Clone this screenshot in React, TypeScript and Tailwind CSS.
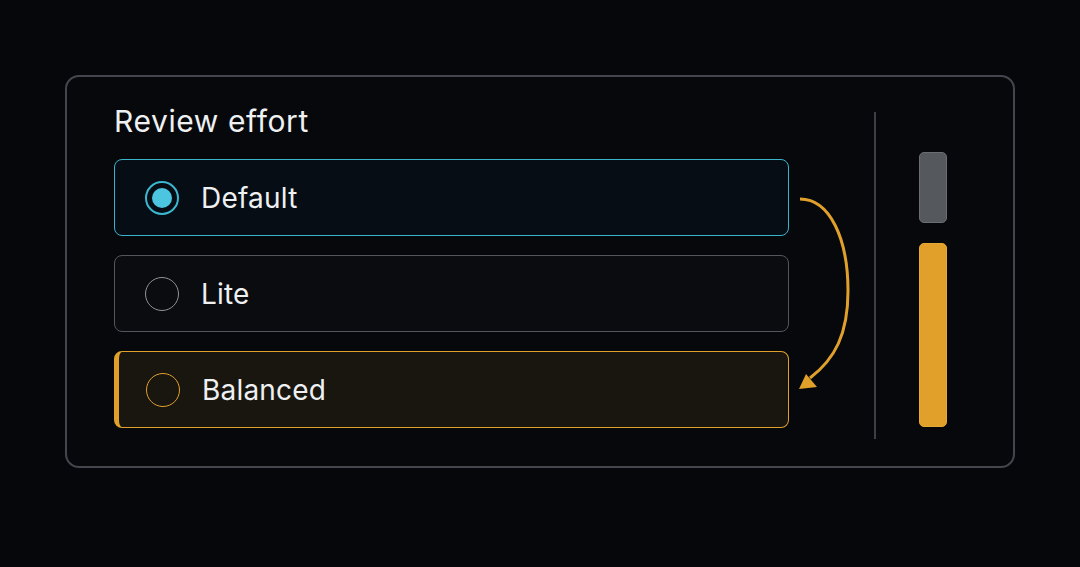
import React from "react";

function Radio({ kind }: { kind: "on" | "off" | "amber" }) {
  if (kind === "on") {
    return (
      <span className="flex h-[34px] w-[34px] items-center justify-center rounded-full border-2 border-[#3bb8d0]">
        <span className="h-[20px] w-[20px] rounded-full bg-[#4cc6e0]" />
      </span>
    );
  }
  return (
    <span
      className={
        "h-[34px] w-[34px] rounded-full border-[1.5px] " +
        (kind === "amber" ? "border-[#e0a02a]" : "border-[#8f9297]")
      }
    />
  );
}

export default function App() {
  return (
    <div
      className="flex h-[567px] w-full justify-center bg-[#05070b] pt-[75px]"
      style={{ fontFamily: "Inter, 'Noto Sans', sans-serif" }}
    >
      <div className="flex h-[393px] w-[950px] rounded-[14px] border-2 border-[#43474d] bg-[#06080c]">
        {/* left column */}
        <div className="flex w-[723px] flex-col pl-[47px] pt-[24px]">
          <div className="text-[30px] leading-[40px] tracking-[0.6px] text-[#eef0f2]">Review effort</div>
          <div className="mt-[18px] flex w-[675px] flex-col gap-[19px]">
            <div className="flex h-[77px] items-center gap-[22px] rounded-[8px] border-[1.5px] border-[#3ab4cb] bg-[#060d14] pl-[30px]">
              <Radio kind="on" />
              <span className="text-[28px] tracking-[0.2px] text-[#eef0f2]">Default</span>
            </div>
            <div className="flex h-[77px] items-center gap-[22px] rounded-[8px] border-[1.5px] border-[#53575d] bg-[#0b0c0f] pl-[30px]">
              <Radio kind="off" />
              <span className="text-[28px] tracking-[0.2px] text-[#eef0f2]">Lite</span>
            </div>
            <div className="flex h-[77px] items-center gap-[22px] rounded-[8px] border-[1.5px] border-l-[5px] border-[#e0a02a] bg-[#18160f] pl-[27px]">
              <Radio kind="amber" />
              <span className="text-[28px] tracking-[0.2px] text-[#eef0f2]">Balanced</span>
            </div>
          </div>
        </div>
        {/* arrow */}
        <div className="w-[84px] pt-[82px]">
          <svg width="86" height="270" viewBox="0 0 86 270">
            <path
              d="M 10 40 C 40 40, 58 80, 58 132 C 58 175, 45 200, 20 219"
              fill="none"
              stroke="#e0a02a"
              strokeWidth="3"
            />
            <polygon points="9,230 16,215 27,228" fill="#e0a02a" />
          </svg>
        </div>
        {/* divider */}
        <div className="mt-[35px] h-[327px] w-[2px] bg-[#3c4046]" />
        {/* bars */}
        <div className="ml-[43px] flex flex-col gap-[20px] pt-[75px]">
          <div className="h-[71px] w-[28px] rounded-[5px] border border-[#6a6e73] bg-[#55585d]" />
          <div className="h-[184px] w-[28px] rounded-[5px] border border-[#e6a933] bg-[#e0a02a]" />
        </div>
      </div>
    </div>
  );
}
